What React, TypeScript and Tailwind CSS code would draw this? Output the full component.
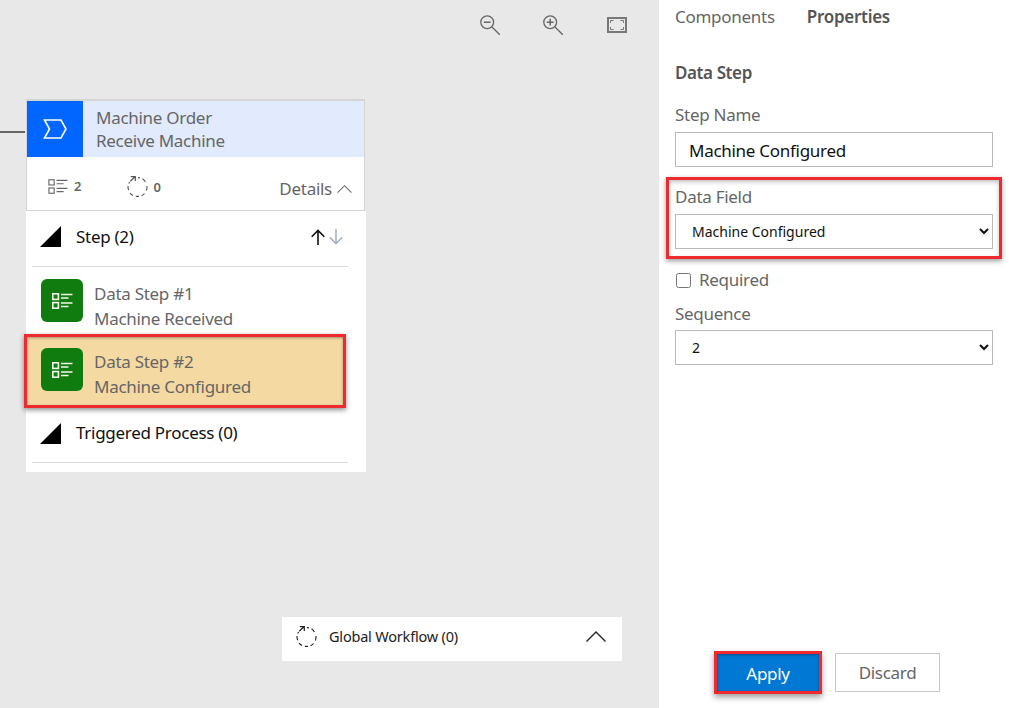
import React from "react";

function ListIcon({ className, stroke = "currentColor", sw = 1.2 }: { className?: string; stroke?: string; sw?: number }) {
  return (
    <svg viewBox="0 0 21 16" className={className} fill="none" stroke={stroke} strokeWidth={sw}>
      <rect x="0.8" y="0.8" width="5.6" height="5.6" />
      <rect x="0.8" y="9.6" width="5.6" height="5.6" />
      <path d="M9 1.5H20.5M9 5H16.5M9 10H20.5M9 13.5H16.5" />
    </svg>
  );
}

function CycleIcon({ className }: { className?: string }) {
  return (
    <svg viewBox="0 0 21 21" className={className} fill="none" stroke="currentColor" strokeWidth="1.1">
      <path d="M15.5 2.8A9.4 9.4 0 0 1 18.4 6M20 10A9.4 9.4 0 0 1 19.4 14.5M17.5 17.5A9.4 9.4 0 0 1 14.5 19.8M12 20.4H8.8M6 19.6A9.4 9.4 0 0 1 3 17.2M1.6 14.2A9.4 9.4 0 0 1 1 10M1.7 7.5A9.4 9.4 0 0 1 2.6 6" />
      <path d="M11 1.6A9.4 9.4 0 0 1 13 1.9" />
      <path d="M3.2 5.2L8 0.8M3.8 0.7H8.3V5" strokeWidth="1.2" />
    </svg>
  );
}

function Triangle() {
  return <svg viewBox="0 0 21 21" className="w-[21px] h-[21px] shrink-0"><path d="M21 0V21H0Z" fill="#000" /></svg>;
}

function StepIcon() {
  return (
    <div className="w-[42px] h-[43px] rounded-[6px] bg-[#107c10] flex items-center justify-center shrink-0">
      <ListIcon className="w-[21px] h-[16px]" stroke="#f3f7e8" sw={1.6} />
    </div>
  );
}

function Magnifier({ plus }: { plus?: boolean }) {
  return (
    <svg viewBox="0 0 20 20" className="w-[20px] h-[20px] text-[#666]" fill="none" stroke="currentColor" strokeWidth="1.3">
      <circle cx="7.2" cy="7.2" r="6.4" />
      <path d="M12 12L20 20" />
      <path d="M3.8 7.2H10.6" strokeWidth="1.5" />
      {plus && <path d="M7.2 3.8V10.6" strokeWidth="1.5" />}
    </svg>
  );
}

function Chevron({ className }: { className?: string }) {
  return (
    <svg viewBox="0 0 20 11" className={className} fill="none" stroke="currentColor" strokeWidth="1.4">
      <path d="M0.5 10.5L10 1L19.5 10.5" />
    </svg>
  );
}

function Arrow({ className }: { className?: string }) {
  return (
    <svg viewBox="0 0 14 16" className={className} fill="none" stroke="currentColor" strokeWidth="1.6">
      <path d="M7 16V1.5M0.7 7.8L7 1.5L13.3 7.8" />
    </svg>
  );
}

export default function App() {
  return (
    <div className="flex w-[1009px] h-[708px] overflow-hidden bg-white font-['Noto_Sans','Open_Sans',sans-serif]">
      {/* Canvas */}
      <div className="w-[659px] h-full bg-[#e8e8e8] flex flex-col shrink-0">
        <div className="h-[99px] flex items-start justify-end gap-[44px] pt-[15px] pr-[32px] shrink-0">
          <div className="-mr-[1px]"><Magnifier /></div>
          <Magnifier plus />
          <svg viewBox="0 0 20 16" className="w-[20px] h-[16px] mt-[2px] text-[#777]" fill="none" stroke="currentColor">
            <rect x="1" y="1" width="18" height="14" strokeWidth="2" />
            <path d="M3.5 6V3.5H6.5M13.5 3.5H16.5V6M3.5 10V12.5H6.5M13.5 12.5H16.5V10" strokeWidth="1" />
          </svg>
        </div>

        {/* Node */}
        <div className="relative ml-[26px] w-[340px] flex flex-col">
          <div className="absolute left-[-26px] top-[32px] w-[25px] h-[2px] bg-[#666]" />
          <div className="w-[339px] border border-[#d4d4d4] border-t-2 bg-white flex flex-col h-[112px]">
            <div className="flex h-[56px] bg-[#e1ebfd] shrink-0">
              <div className="w-[56px] h-[56px] bg-[#0066ff] flex items-center justify-center">
                <svg viewBox="0 0 24 20" className="w-[24px] h-[20px]" fill="none" stroke="#fff" strokeWidth="1.6">
                  <path d="M1.5 1H18L23 10L18 19H1.5L6.5 10Z" />
                </svg>
              </div>
              <div className="pl-[13px] pb-[1px] flex flex-col justify-center text-[#666] text-[17px] leading-[23px] tracking-[-0.28px]">
                <div>Machine Order</div>
                <div>Receive Machine</div>
              </div>
            </div>
            <div className="flex flex-1 items-start text-[#666]">
              <div className="flex items-center pl-[21px] pt-[21px] gap-[6px] text-[13px] font-semibold leading-[16px]">
                <ListIcon className="w-[20px] h-[15px]" />
                <span>2</span>
              </div>
              <div className="flex items-center pl-[46px] pt-[19px] gap-[5px] text-[13px] font-semibold leading-[16px]">
                <CycleIcon className="w-[21px] h-[21px] text-[#555]" />
                <span>0</span>
              </div>
              <div className="ml-auto flex items-center gap-[5px] pt-[21px] pr-[12px] text-[17px] leading-[22px] tracking-[-0.28px]">
                <span>Details</span>
                <Chevron className="w-[15px] h-[8px]" />
              </div>
            </div>
          </div>

          <div className="bg-white h-[261px] flex flex-col">
            <div className="ml-[6px] mr-[18px] h-[56px] pb-[4px] border-b border-[#d9d9d9] flex items-center shrink-0">
              <div className="ml-[8px]"><Triangle /></div>
              <span className="ml-[15px] text-[17px] tracking-[-0.28px] text-[#111]">Step (2)</span>
              <div className="ml-auto mr-[5px] flex items-center gap-[4px]">
                <Arrow className="w-[14px] h-[16px] text-[#111]" />
                <Arrow className="w-[14px] h-[16px] text-[#a9b2c3] rotate-180" />
              </div>
            </div>

            <div className="flex items-center h-[67px] pl-[15px] shrink-0">
              <StepIcon />
              <div className="ml-[11px] pt-[10px] text-[#666] text-[17px] leading-[25px] tracking-[-0.28px]">
                <div>Data Step #1</div>
                <div>Machine Received</div>
              </div>
            </div>

            <div className="-ml-[2px] w-[322px] h-[74px] border-[3px] border-[#ee2a2e] shadow-[0_2px_5px_rgba(0,0,0,0.45),inset_0_1px_3px_rgba(0,0,0,0.35)] bg-[#f4d9a2] flex items-center pl-[14px] pb-[3px] shrink-0">
              <StepIcon />
              <div className="ml-[11px] pt-[8px] text-[#666] text-[17px] leading-[25px] tracking-[-0.28px]">
                <div>Data Step #2</div>
                <div>Machine Configured</div>
              </div>
            </div>

            <div className="ml-[6px] mr-[18px] h-[55px] pb-[4px] border-b border-[#d9d9d9] flex items-center shrink-0">
              <div className="ml-[8px]"><Triangle /></div>
              <span className="ml-[15px] text-[17px] tracking-[-0.28px] text-[#111]">Triggered Process (0)</span>
            </div>
          </div>
        </div>

        <div className="mt-[145px] ml-[282px] w-[340px] h-[44px] bg-white flex items-center pl-[14px] pr-[16px] pb-[6px]">
          <CycleIcon className="w-[21px] h-[21px] text-[#222]" />
          <span className="ml-[12px] mt-[2px] text-[14.5px] tracking-[-0.2px] text-[#222]">Global Workflow (0)</span>
          <Chevron className="ml-auto w-[20px] h-[11px] text-[#222]" />
        </div>
      </div>

      {/* Properties */}
      <div className="flex-1 flex flex-col pl-[16px] pr-[16px] text-[#666]">
        <div className="h-[34px] flex items-center gap-[32px] text-[17px] tracking-[-0.28px] shrink-0">
          <span>Components</span>
          <span className="font-semibold text-[#555]">Properties</span>
        </div>
        <div className="mt-[26px] text-[17px] leading-[26px] font-semibold tracking-[-0.4px] text-[#555]">Data Step</div>
        <div className="mt-[17px] text-[17px] leading-[24px] tracking-[-0.28px]">Step Name</div>
        <input
          readOnly
          value="Machine Configured"
          className="mt-[5px] w-[318px] h-[35px] border border-[#b9b9b9] pl-[13px] pt-[1px] text-[17px] tracking-[-0.28px] text-[#111] outline-none"
        />
        <div className="-mx-[9px] mt-[10px] h-[82px] border-[3px] border-[#ee2a2e] px-[6px] shadow-[0_2px_5px_rgba(0,0,0,0.4),inset_0_2px_4px_rgba(0,0,0,0.25)] flex flex-col shrink-0">
          <div className="mt-[5px] text-[17px] leading-[24px] tracking-[-0.28px]">Data Field</div>
          <select className="mt-[5px] w-[318px] h-[35px] border border-[#b9b9b9] pl-[12px] text-[14px] text-[#111] outline-none bg-white">
            <option>Machine Configured</option>
          </select>
        </div>
        <label className="mt-[10px] flex items-center h-[22px]">
          <input type="checkbox" readOnly className="ml-[1px] w-[15px] h-[15px] accent-[#555]" />
          <span className="ml-[8px] text-[17px] tracking-[-0.28px]">Required</span>
        </label>
        <div className="mt-[11px] text-[17px] leading-[24px] tracking-[-0.28px]">Sequence</div>
        <select className="mt-[4px] w-[318px] h-[35px] border border-[#b9b9b9] pl-[12px] text-[14px] text-[#111] outline-none bg-white">
          <option>2</option>
        </select>

        <div className="mt-auto mb-[14px] flex items-start ml-[39px]">
          <button className="w-[108px] h-[43px] pt-[2px] border-[3px] border-[#ee2a2e] bg-[#0078d4] text-white text-[17px] tracking-[-0.3px] shadow-[0_3px_6px_rgba(0,0,0,0.4),inset_0_1px_3px_rgba(0,0,0,0.35)]">
            Apply
          </button>
          <button className="ml-[13px] mt-[2px] w-[105px] h-[39px] border border-[#c6c6c6] bg-white text-[#666] text-[17px] tracking-[-0.3px]">
            Discard
          </button>
        </div>
      </div>
    </div>
  );
}
